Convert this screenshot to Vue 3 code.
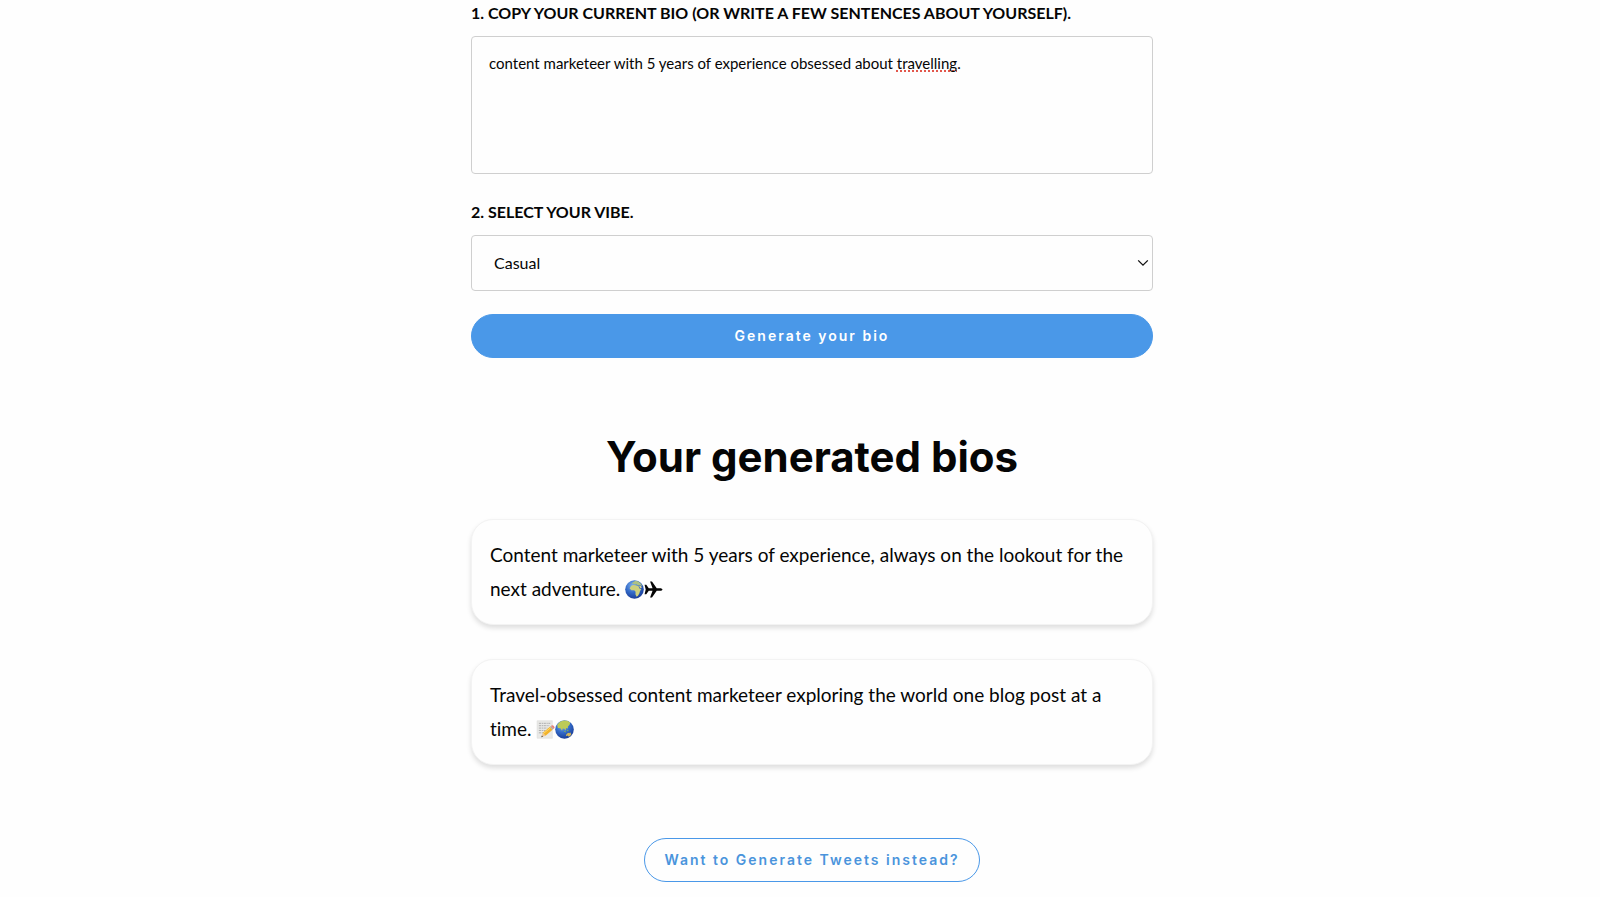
<template>
  <main class="page">
    <form class="form" @submit.prevent>
      <div class="field">
        <label class="field__label" for="bio">1. Copy your current bio (or write a few sentences about yourself).</label>
        <div class="editor">
          <div class="editor__marks" aria-hidden="true">{{ marks.before }}<span class="editor__typo">{{ marks.word }}</span></div>
          <textarea id="bio" v-model="bio" class="editor__input" rows="4" spellcheck="false"></textarea>
        </div>
      </div>

      <div class="field">
        <label class="field__label" for="vibe">2. Select your vibe.</label>
        <div class="select">
          <select id="vibe" v-model="vibe" class="select__input">
            <option v-for="option in vibes" :key="option">{{ option }}</option>
          </select>
          <svg class="select__arrow" viewBox="0 0 12 8" aria-hidden="true">
            <path d="M1.2 1.4 6 6.2l4.8-4.8" fill="none" stroke="#111" stroke-width="1.3" />
          </svg>
        </div>
      </div>

      <button type="submit" class="button button--primary">Generate your bio</button>
    </form>

    <h2 class="title">Your generated bios</h2>

    <ul class="bios">
      <li v-for="item in bios" :key="item.text" class="bio">
        {{ item.text }}
        <span class="bio__icons">
          <svg v-for="icon in item.icons" :key="icon" class="bio__icon" viewBox="0 0 20 20" role="img" :aria-label="icon">
            <template v-if="icon === 'plane'">
              <path d="M.6 5h1.800l2.600 3.600h4L6.400 1.600h2l5 7h3.400c1.500 0 2.600.7 2.600 1.400s-1.100 1.400-2.600 1.400h-3.400l-5 7h-2L9 11.400H5L2.400 15H.6l1.200-5z" fill="#050505" />
            </template>
            <template v-else-if="icon === 'memo'">
              <path d="M1.2.8h16v18.4h-16z" fill="#e9e9e7" stroke="#d6d6d4" stroke-width=".5" />
              <path d="M3 3.5h12M3 6h11M3 8.5h9M3 11h7M3 13.5h5" stroke="#a5a5a5" stroke-width=".9" stroke-dasharray="2.4 .7 1.3 .6" />
              <path d="m5.6 18.2 1.5-4.7 3 3.2z" fill="#edc796" />
              <path d="m5.6 18.2.6-1.8 1.1 1.2z" fill="#333" />
              <path d="m7.1 13.5 7.6-6.3 2.7 3.1-7.3 6.4z" fill="#f2b32c" />
              <path d="m7.8 14.2 7.7-6.1" stroke="#ffd968" stroke-width="1" />
              <path d="m14.7 7.2 1-.8 2.7 3.1-1 .8z" fill="#a9a9a9" />
              <path d="m15.7 6.4 1.1-.9c1.5-.3 3 1.4 2.7 2.9l-1.1 1.1z" fill="#e5847a" />
            </template>
            <template v-else>
              <defs>
                <radialGradient :id="`sea-${icon}`" cx=".4" cy=".28" r=".75">
                  <stop offset="0" stop-color="#7fb0ea" />
                  <stop offset=".5" stop-color="#346cca" />
                  <stop offset="1" stop-color="#173994" />
                </radialGradient>
              </defs>
              <circle cx="10" cy="10" r="9.8" :fill="`url(#sea-${icon})`" />
              <g v-if="icon === 'africa'" fill="#cdd07c">
                <path d="m6.3 6.2 2.2-1 2.5.2 3 .8 1.500 3 1.700.3-1.500 2.300-.5 2.200-1.500 2.500-1.500 1-1.200-2.200.1-2.900-1.400-1.600-2.900.1-1.900-2z" />
                <path d="m7 4.500 1-2L11 .8l3 .8 2.500 2 1.700 2.800-2.500-.9-1.600.4-2.200-1.400-2 .3-1.400-1z" fill="#aec283" />
                <path d="m14.7 6 2 .2 1.100 1.800-1.700.7z" fill="#d9cd88" />
              </g>
              <g v-else fill="#bccb58">
                <path d="m2.300 5 3-3.200L9 .5l4 .4 3 1.800-.7 2.500-1.600 1.400-.3 2.300-1.800-.6-.4 3-1.400-2-1.700-.4-.7 2.300-1.700-2.500-2.700-.4z" />
                <path d="m9.500 11.300 2 .8.200 1-2.300-.7zm3.500-1 1.200.2-.3 1.400-1.300-.3z" fill="#76ad68" />
                <path d="m11.800 15.300 2-1.800 1.400.4.700-1 1.300 2-1.500 2.200-1.500.3-1-1-1.700.6z" fill="#d2b65b" />
              </g>
            </template>
          </svg>
        </span>
      </li>
    </ul>

    <button type="button" class="button button--outline">Want to Generate Tweets instead?</button>
  </main>
</template>

<script setup>
import { ref, computed } from 'vue'

const bio = ref('content marketeer with 5 years of experience obsessed about travelling.')
const vibe = ref('Casual')
const vibes = ['Casual', 'Professional', 'Funny']

const bios = [
  {
    text: 'Content marketeer with 5 years of experience, always on the lookout for the next adventure.',
    icons: ['africa', 'plane']
  },
  {
    text: 'Travel-obsessed content marketeer exploring the world one blog post at a time.',
    icons: ['memo', 'asia']
  }
]

// the invisible copy of the text carries the spelling underline
const marks = computed(() => {
  const word = 'travelling'
  const at = bio.value.indexOf(word)
  return at < 0 ? { before: '', word: '' } : { before: bio.value.slice(0, at), word }
})
</script>

<style>
body {
  margin: 0;
  background: #fefefe;
}
</style>

<style scoped>
.page {
  box-sizing: border-box;
  display: flex;
  flex-direction: column;
  align-items: center;
  padding: 1px 0 14px 24px;
  color: #050505;
  font-family: Lato, "Liberation Sans", sans-serif;
  font-variant-ligatures: none;
}

.form {
  display: flex;
  flex-direction: column;
  width: 100%;
  max-width: 682px;
}

.field {
  display: flex;
  flex-direction: column;
  gap: 11px;
}

.field + .field {
  margin-top: 26px;
}

.field__label {
  font-size: 16px;
  font-weight: 700;
  line-height: 24px;
  text-transform: uppercase;
}

.editor {
  display: grid;
}

.editor__marks,
.editor__input {
  grid-area: 1 / 1;
  box-sizing: border-box;
  width: 100%;
  height: 138px;
  margin: 0;
  padding: 14px 17px;
  border: 1px solid #cfcfcf;
  border-radius: 4px;
  font: 400 15px/24px Lato, "Liberation Sans", sans-serif;
  font-variant-ligatures: none;
  white-space: pre-wrap;
}

.editor__marks {
  border-color: transparent;
  color: transparent;
}

.editor__input {
  background: transparent;
  color: inherit;
  outline: none;
  resize: none;
}

.editor__typo {
  text-decoration: underline dotted #e2574c 2px;
  text-decoration-skip-ink: none;
  text-underline-offset: 1px;
}

.select {
  position: relative;
}

.select__input {
  display: block;
  box-sizing: border-box;
  width: 100%;
  height: 56px;
  padding: 0 22px;
  border: 1px solid #cfcfcf;
  border-radius: 4px;
  background: transparent;
  color: inherit;
  font: 400 16px/24px Lato, "Liberation Sans", sans-serif;
  appearance: none;
}

.select__arrow {
  position: absolute;
  top: 24px;
  right: 4px;
  width: 12px;
  height: 8px;
  pointer-events: none;
}

.button {
  box-sizing: border-box;
  height: 44px;
  padding: 0 19px;
  border: 1px solid #4a98e8;
  border-radius: 22px;
  font: 600 14px/24px Inter, "Liberation Sans", sans-serif;
  letter-spacing: 2px;
  cursor: pointer;
}

.button--primary {
  margin-top: 23px;
  background: #4a98e8;
  color: #fff;
}

.button--outline {
  margin-top: 73px;
  background: transparent;
  color: #4a94dc;
}

.title {
  margin: 75px 0 38px;
  font: 700 42px/48px Inter, "Liberation Sans", sans-serif;
}

.bios {
  display: flex;
  flex-direction: column;
  gap: 34px;
  width: 100%;
  max-width: 682px;
  margin: 0;
  padding: 0;
  list-style: none;
}

.bio {
  padding: 18px;
  border: 1px solid #f3f3f3;
  border-radius: 22px;
  background: #fefefe;
  box-shadow: 0 3px 5px rgba(0, 0, 0, 0.13);
  font-size: 19px;
  line-height: 34px;
}

.bio__icons {
  display: inline-flex;
  vertical-align: -3px;
}

.bio__icon {
  width: 19px;
  height: 19px;
}
</style>
